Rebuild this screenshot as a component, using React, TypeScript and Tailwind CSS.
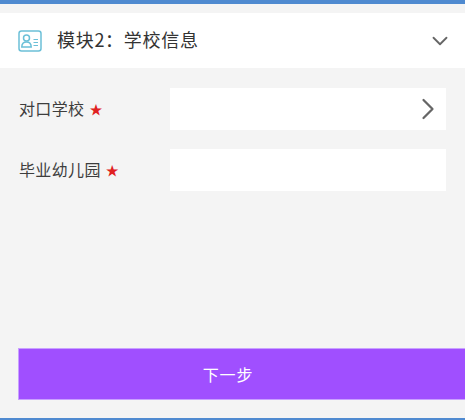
import { ChevronDown, ChevronRight } from 'lucide-react';

const FONT = "font-['Noto_Sans_CJK_SC','Noto_Sans',sans-serif]";

function CardIcon() {
  return (
    <svg width="24" height="22" viewBox="0 0 24 22" fill="none" stroke="#6cc0d8" strokeWidth="1.5">
      <rect x="1" y="1" width="22" height="20" rx="2.5" />
      <circle cx="8.5" cy="8" r="3" />
      <path d="M3.8 17c0-3 2-5 4.7-5s4.7 2 4.7 5z" />
      <path d="M15.5 9.5h4.5M15.5 12.5h4.5M15.5 15.5h4.5" strokeWidth="1.2" />
    </svg>
  );
}

function FormRow({ label, arrow }: { label: string; arrow?: boolean }) {
  return (
    <div className="flex items-center pl-[19px] pr-[19px]">
      <div className="w-[151px] flex items-center pb-[2px] text-[16px] tracking-[0.35px] text-[#3d3d3d]">
        {label}
        <span className="ml-[5px] text-[13px] leading-none text-[#e02020]">★</span>
      </div>
      <div className="flex-1 h-[42px] bg-white flex items-center justify-end">
        {arrow && <ChevronRight className="w-[36px] h-[36px] text-[#666666]" strokeWidth={1.5} />}
      </div>
    </div>
  );
}

export default function App() {
  return (
    <div className={`h-[420px] w-[465px] flex flex-col bg-[#f4f4f4] overflow-hidden ${FONT}`}>
      <div className="h-[4px] bg-[#4f8ad0]" />
      <div className="mt-[9px] h-[55px] bg-white flex items-center pl-[18px] pr-[12px] shrink-0">
        <CardIcon />
        <span className="ml-[15px] flex-1 pb-[3px] text-[18px] text-[#333333] tracking-[0.7px]">模块2：学校信息</span>
        <ChevronDown className="w-[26px] h-[26px] text-[#666666]" strokeWidth={1.7} />
      </div>
      <div className="mt-[20px] flex flex-col gap-[19px]">
        <FormRow label="对口学校" arrow />
        <FormRow label="毕业幼儿园" />
      </div>
      <div className="mt-auto pl-[18px] pb-[18px]">
        <button className="w-full h-[52px] pr-[28px] bg-[#a04fff] border-y border-l border-[#c9a0ff] text-white text-[16px] tracking-[0.8px]">
          下一步
        </button>
      </div>
      <div className="h-[2px] bg-[#4f8ad0]" />
    </div>
  );
}
